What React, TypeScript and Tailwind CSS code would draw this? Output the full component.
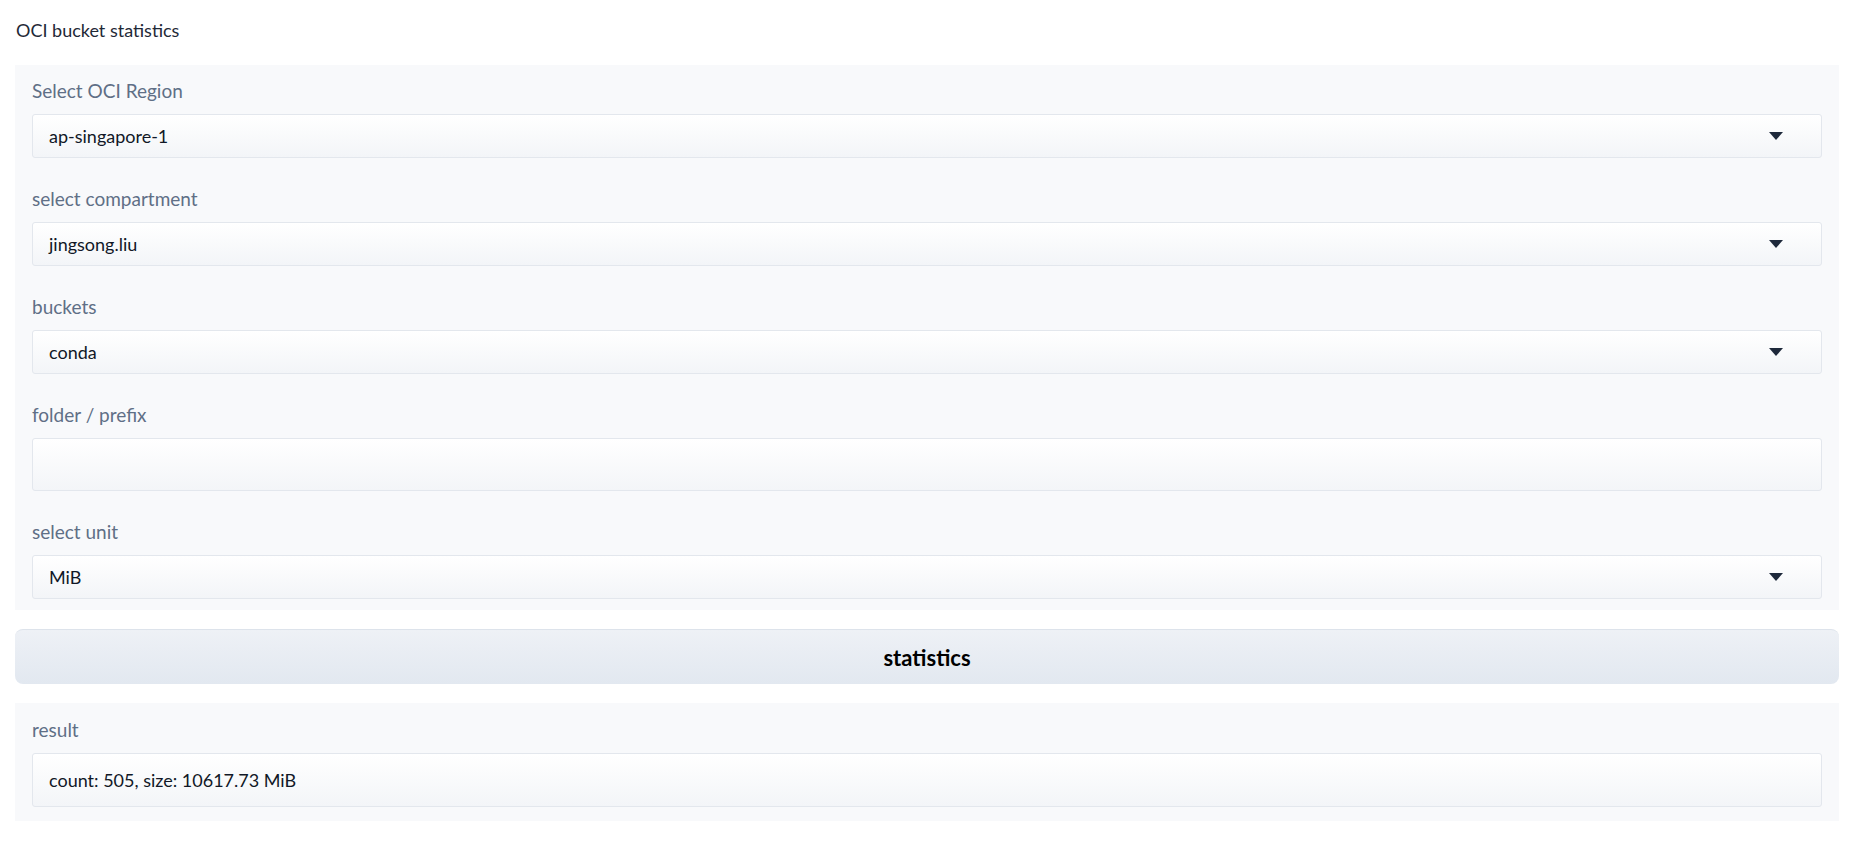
import { useState } from "react";

function Arrow() {
    return (
        <svg width="14" height="8" viewBox="0 0 14 8" className="shrink-0">
            <path d="M0 0 H14 L7 8 Z" fill="#1e293b" />
        </svg>
    );
}

function Field({ label, children }: { label: string, children: React.ReactNode }) {
    return (
        <div className="flex flex-col">
            <label className="text-[19px] leading-6 text-[#5f6f86] mb-[11px]">{label}</label>
            {children}
        </div>
    );
}

const boxClass = "w-full flex items-center justify-between pl-[16px] border border-[#e3e7ed] rounded-[3px] bg-gradient-to-b from-white to-[#f3f5f8] text-[18px] text-[#111827]";

function Dropdown({ value }: { value: string }) {
    return (
        <div className={boxClass + " h-[44px] pr-[38px]"}>
            <span>{value}</span>
            <Arrow />
        </div>
    );
}

export default function App() {
    const [prefix, setPrefix] = useState("");

    return (
        <div className="min-h-screen bg-white pl-[15px] pr-[12px] pt-[18px] font-['Lato','Liberation_Sans',sans-serif]">
            <div className="text-[18px] leading-6 text-[#1f2937] pl-px">OCI bucket statistics</div>

            <div className="mt-[23px] bg-[#f8f9fb] px-[17px] pt-[14px] pb-[11px] flex flex-col gap-[29px]">
                <Field label="Select OCI Region">
                    <Dropdown value="ap-singapore-1" />
                </Field>
                <Field label="select compartment">
                    <Dropdown value="jingsong.liu" />
                </Field>
                <Field label="buckets">
                    <Dropdown value="conda" />
                </Field>
                <Field label="folder / prefix">
                    <input
                        value={prefix}
                        onChange={(e) => setPrefix(e.target.value)}
                        className={boxClass + " h-[53px] outline-none"}
                    />
                </Field>
                <Field label="select unit">
                    <Dropdown value="MiB" />
                </Field>
            </div>

            <button className="mt-[19px] w-full h-[55px] rounded-lg border-t border-[#dde3eb] bg-gradient-to-b from-[#eef1f6] to-[#e2e8f0] text-[22px] font-bold text-black">
                statistics
            </button>

            <div className="mt-[19px] bg-[#f8f9fb] px-[17px] pt-[15px] pb-[14px]">
                <Field label="result">
                    <div className={boxClass + " h-[54px]"}>
                        <span>count: 505, size: 10617.73 MiB</span>
                    </div>
                </Field>
            </div>
        </div>
    );
}
